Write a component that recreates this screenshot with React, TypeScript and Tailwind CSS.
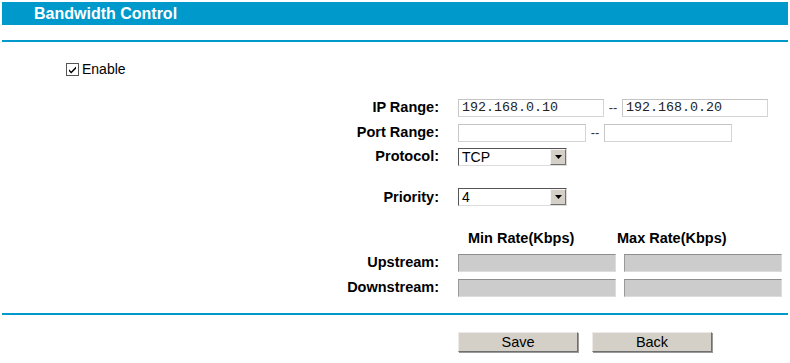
import React from "react";

const Label = ({ children }: { children: React.ReactNode }) => (
  <div className="w-[439px] text-right font-bold text-[14.5px] text-black leading-none">{children}</div>
);

const TextInput = ({ w, value }: { w: string; value?: string }) => (
  <div
    className={`${w} h-[18px] bg-white border border-[#d4d4d4] border-t-[#c4c4c4] border-l-[#c8c8c8] flex items-center pl-[3px] font-['Liberation_Mono','Courier_New',monospace] text-[13.33px] text-[#222] leading-none`}
  >
    {value}
  </div>
);

const Select = ({ value }: { value: string }) => (
  <div className="w-[109px] h-[18px] flex border border-t-[#555] border-l-[#555] border-r-[#ddd] border-b-[#ddd] bg-white">
    <div className="flex-1 flex items-center pl-[3px] text-[14px] leading-none text-black">{value}</div>
    <div className="w-[16px] h-full bg-[#d4d0c8] border border-t-[#f4f4f4] border-l-[#f4f4f4] border-r-[#707070] border-b-[#707070] flex items-center justify-center">
      <svg width="7" height="4" viewBox="0 0 7 4">
        <path d="M0 0h7L3.5 4z" fill="#000" />
      </svg>
    </div>
  </div>
);

const RateInput = () => (
  <div className="w-[158px] h-[18px] bg-[#cccccc] border border-t-[#8e8e8e] border-l-[#9a9a9a] border-r-[#dcdcdc] border-b-[#dcdcdc]" />
);

const Button = ({ children }: { children: React.ReactNode }) => (
  <button className="w-[120px] h-[20px] bg-[#d4d0c8] border border-t-[#ecebe8] border-l-[#ecebe8] border-r-[#6f6f6f] border-b-[#6f6f6f] shadow-[1px_1px_0_#9a9a9a] text-[14.5px] leading-none text-black font-['Liberation_Sans',Arial,sans-serif]">
    {children}
  </button>
);

export default function App() {
  return (
    <div className="w-[790px] h-[363px] bg-white font-['Liberation_Sans',Arial,sans-serif] overflow-hidden">
      <div className="pt-[2px] px-[2px]">
        <div className="h-[23px] bg-[#0099cc] flex items-center pl-[32px] text-white font-bold text-[16px] leading-none">
          Bandwidth Control
        </div>
      </div>
      <div className="mt-[15px] mx-[2px] h-[2px] bg-[#0099cc]" />

      <div className="mt-[17px] h-[20px] flex items-center pl-[66px]">
        <svg width="13" height="13" viewBox="0 0 13 13" className="shrink-0">
          <rect x="0.5" y="0.5" width="12" height="12" fill="#fff" stroke="#555" />
          <path d="M3 6.2l2.2 2.3L10 3.6v2.1L5.2 10.6 3 8.3z" fill="#000" />
        </svg>
        <span className="ml-[3px] text-[14px] text-black leading-none">Enable</span>
      </div>

      <div className="mt-[16px] flex flex-col">
        <div className="h-[25px] flex items-center">
          <Label>IP Range:</Label>
          <div className="ml-[19px] flex items-center">
            <TextInput w="w-[146px]" value="192.168.0.10" />
            <span className="w-[18px] text-center text-[13px] text-[#333] leading-none">--</span>
            <TextInput w="w-[146px]" value="192.168.0.20" />
          </div>
        </div>
        <div className="h-[25px] flex items-center">
          <Label>Port Range:</Label>
          <div className="ml-[19px] flex items-center">
            <TextInput w="w-[128px]" />
            <span className="w-[18px] text-center text-[13px] text-[#333] leading-none">--</span>
            <TextInput w="w-[128px]" />
          </div>
        </div>
        <div className="h-[23px] flex items-center">
          <Label>Protocol:</Label>
          <div className="ml-[19px]">
            <Select value="TCP" />
          </div>
        </div>
        <div className="mt-[17px] h-[24px] flex items-center">
          <Label>Priority:</Label>
          <div className="ml-[19px]">
            <Select value="4" />
          </div>
        </div>
        <div className="mt-[17px] h-[24px] flex items-center pl-[468px] font-bold text-[14.5px] text-black leading-none">
          <span className="w-[149px]">Min Rate(Kbps)</span>
          <span>Max Rate(Kbps)</span>
        </div>
        <div className="h-[25px] flex items-center">
          <Label>Upstream:</Label>
          <div className="ml-[19px] flex gap-[8px]">
            <RateInput />
            <RateInput />
          </div>
        </div>
        <div className="h-[25px] flex items-center">
          <Label>Downstream:</Label>
          <div className="ml-[19px] flex gap-[8px]">
            <RateInput />
            <RateInput />
          </div>
        </div>
      </div>

      <div className="mt-[13px] mx-[2px] h-[2px] bg-[#0099cc]" />

      <div className="mt-[17px] flex pl-[458px] gap-[14px]">
        <Button>Save</Button>
        <Button>Back</Button>
      </div>
    </div>
  );
}
